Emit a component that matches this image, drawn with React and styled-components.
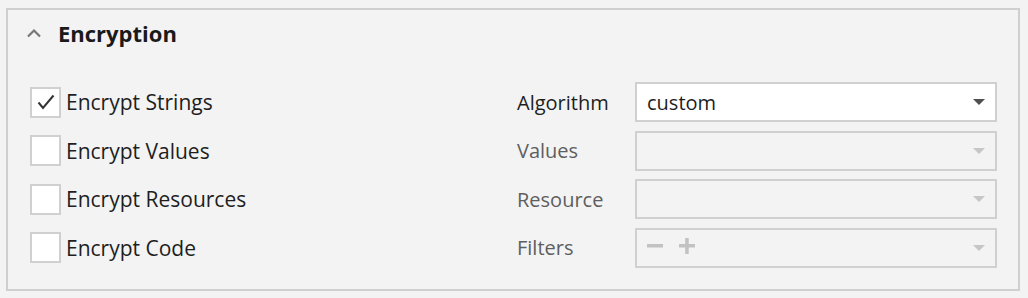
import styled, { createGlobalStyle } from "styled-components";

const GlobalStyle = createGlobalStyle`
  html, body {
    margin: 0;
    padding: 0;
    background: #f3f3f3;
    font-family: "Open Sans", "Noto Sans", sans-serif;
  }
  * {
    box-sizing: border-box;
  }
`;

const Panel = styled.section`
  margin: 8px 0 0 6px;
  width: 1014px;
  height: 283px;
  border: 2px solid #cfcfcf;
`;

const Header = styled.div`
  display: flex;
  align-items: center;
  height: 46px;
  padding-left: 18px;
  gap: 16px;
`;

const Title = styled.span`
  font-size: 22px;
  font-weight: 700;
  color: #1a1a1a;
`;

const Rows = styled.div`
  margin-top: 26px;
  padding: 0 21px 0 22px;
  display: grid;
  row-gap: 8.5px;
`;

const Row = styled.div`
  display: flex;
  align-items: center;
  height: 40px;
`;

const CheckField = styled.label`
  flex: 1;
  display: flex;
  align-items: center;
  gap: 5px;
`;

const Box = styled.span`
  width: 31px;
  height: 31px;
  border: 2px solid #d0d0d0;
  background: #ffffff;
  display: flex;
  align-items: center;
  justify-content: center;
`;

const Label = styled.span`
  font-size: ${(props) => props.size ?? "21px"};
  color: ${(props) => (props.muted ? "#5e5e5e" : "#1e1e1e")};
  width: ${(props) => props.width ?? "auto"};
`;

const Combo = styled.div`
  width: 362px;
  height: 40px;
  border: 2px solid #d0d0d0;
  background: ${(props) => (props.disabled ? "transparent" : "#ffffff")};
  display: flex;
  align-items: center;
  padding: 0 10px 0 10px;
  gap: 10px;
`;

const Value = styled.span`
  flex: 1;
  font-size: 20px;
  color: #1e1e1e;
`;

const Fill = styled.span`
  flex: 1;
`;

const Chevron = () => (
  <svg width="16" height="10" viewBox="0 0 16 10">
    <path d="M2 8.5 L8 2.5 L14 8.5" fill="none" stroke="#777" strokeWidth="2.2" />
  </svg>
);

const Check = () => (
  <svg width="20" height="18" viewBox="0 0 20 18">
    <path d="M2.5 9.5 L7 15 L17.5 2.5" fill="none" stroke="#333" strokeWidth="2" />
  </svg>
);

const Arrow = ({ disabled }) => (
  <svg width="12" height="6" viewBox="0 0 12 6">
    <path d="M0 0 H12 L6 6 Z" fill={disabled ? "#c6c6c6" : "#4f4f4f"} />
  </svg>
);

const MinusPlus = () => (
  <svg width="48" height="16" viewBox="0 0 48 16">
    <rect x="0" y="6" width="16" height="3.5" fill="#c2c2c2" />
    <rect x="32" y="6" width="16" height="3.5" fill="#c2c2c2" />
    <rect x="38.2" y="0" width="3.5" height="16" fill="#c2c2c2" />
  </svg>
);

const rows = [
  { label: "Encrypt Strings", checked: true, field: "Algorithm", value: "custom" },
  { label: "Encrypt Values", field: "Values", disabled: true },
  { label: "Encrypt Resources", field: "Resource", disabled: true },
  { label: "Encrypt Code", field: "Filters", disabled: true, filters: true },
];

const App = () => {
  return (
    <>
      <GlobalStyle />
      <Panel>
        <Header>
          <Chevron />
          <Title>Encryption</Title>
        </Header>
        <Rows>
          {rows.map((r) => (
            <Row key={r.label}>
              <CheckField>
                <Box>{r.checked && <Check />}</Box>
                <Label>{r.label}</Label>
              </CheckField>
              <Label width="118px" size="20px" muted={r.disabled}>
                {r.field}
              </Label>
              <Combo disabled={r.disabled}>
                {r.value ? <Value>{r.value}</Value> : <Fill>{r.filters && <MinusPlus />}</Fill>}
                <Arrow disabled={r.disabled} />
              </Combo>
            </Row>
          ))}
        </Rows>
      </Panel>
    </>
  );
};

export default App;
